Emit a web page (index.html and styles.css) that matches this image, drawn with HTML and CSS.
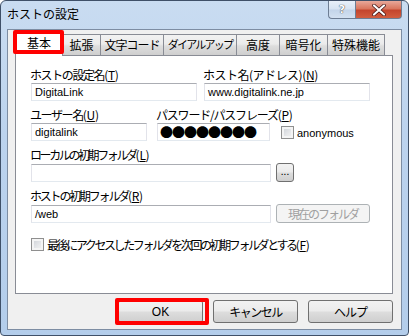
FILE: index.html
```html
<!DOCTYPE html>
<html lang="ja">
<head>
<meta charset="utf-8">
<title>ホストの設定</title>
<link rel="stylesheet" href="styles.css">
</head>
<body>
<div class="window">
  <div class="titlebar">
    <span class="title">ホストの設定</span>
    <div class="caption-btns">
      <div class="cbtn help-btn"><span>?</span></div>
      <div class="cbtn close-btn">
        <svg width="14" height="12" viewBox="0 0 14 12"><path d="M2 1.5 L12 10.5 M12 1.5 L2 10.5" stroke="#3b1010" stroke-width="3.6" stroke-linecap="round"/><path d="M2 1.5 L12 10.5 M12 1.5 L2 10.5" stroke="#ffffff" stroke-width="2.2" stroke-linecap="round"/></svg>
      </div>
    </div>
  </div>
  <div class="client">
    <div class="tabs">
      <div class="tab active t1">基本</div>
      <div class="tab t2">拡張</div>
      <div class="tab t3 ls1">文字コード</div>
      <div class="tab t4 kana-tab">ダイアルアップ</div>
      <div class="tab t5">高度</div>
      <div class="tab t6">暗号化</div>
      <div class="tab t7">特殊機能</div>
      <div class="highlight tab-hl"></div>
    </div>
    <div class="panel">
      <div class="row">
        <div class="field w166">
          <div class="label ls14">ホストの設定名<span class="mn">(<u>T</u>)</span></div>
          <div class="input">DigitaLink</div>
        </div>
        <div class="field w166 ml8">
          <div class="label ls05">ホスト名(アドレス)<span class="mn">(<u>N</u>)</span></div>
          <div class="input">www.digitalink.ne.jp</div>
        </div>
      </div>
      <div class="row">
        <div class="field w116">
          <div class="label ls14">ユーザー名<span class="mn">(<u>U</u>)</span></div>
          <div class="input">digitalink</div>
        </div>
        <div class="field w113 ml11">
          <div class="label ls12">パスワード/パスフレーズ<span class="mn">(<u>P</u>)</span></div>
          <div class="input dots">●●●●●●●●</div>
        </div>
        <div class="check anon">
          <span class="box"></span><span class="latin">anonymous</span>
        </div>
      </div>
      <div class="row">
        <div class="field w240">
          <div class="label ls24">ローカルの初期フォルダ<span class="mn">(<u>L</u>)</span></div>
          <div class="line">
            <div class="input"></div>
            <div class="btn small-btn">...</div>
          </div>
        </div>
      </div>
      <div class="row">
        <div class="field w240">
          <div class="label ls22">ホストの初期フォルダ<span class="mn">(<u>R</u>)</span></div>
          <div class="line">
            <div class="input">/web</div>
            <div class="btn wide-btn disabled ls2">現在のフォルダ</div>
          </div>
        </div>
      </div>
      <div class="check last">
        <span class="box"></span><span class="ls24">最後にアクセスしたフォルダを次回の初期フォルダとする<span class="mn">(<u>F</u>)</span></span>
      </div>
    </div>
    <div class="buttons">
      <div class="btn dlg-btn latin">OK<div class="highlight ok-hl"></div></div>
      <div class="btn dlg-btn ls15">キャンセル</div>
      <div class="btn dlg-btn ls1">ヘルプ</div>
    </div>
  </div>
</div>
</body>
</html>
```

FILE: styles.css
```css
* { box-sizing: border-box; }
html, body { margin: 0; padding: 0; background: #ffffff; }
body {
  font-family: "Noto Sans CJK JP", sans-serif;
  font-size: 12px;
  color: #000;
}
.latin { font-family: "Liberation Sans", sans-serif; }
.ls05 { letter-spacing: -0.5px; }
.ls1 { letter-spacing: -1px; }
.ls12 { letter-spacing: -1.2px; }
.ls14 { letter-spacing: -1.4px; }
.ls15 { letter-spacing: -1.5px; }
.ls2 { letter-spacing: -2px; }
.ls22 { letter-spacing: -2.2px; }
.ls24 { letter-spacing: -2.4px; }
.mn { letter-spacing: -0.3px; }
.window {
  width: 409px;
  height: 336px;
  border: 1px solid #3f5068;
  border-radius: 6px 6px 4px 4px;
  background: linear-gradient(180deg, #c9dcf1 0%, #bcd3ee 40%, #b3cdeb 100%);
  display: flex;
  flex-direction: column;
  overflow: hidden;
}
.titlebar {
  height: 28px;
  display: flex;
  align-items: flex-start;
  justify-content: space-between;
  flex: none;
}
.title {
  padding: 5px 0 0 6px;
  font-size: 12px;
  line-height: 16px;
  color: #000;
}
.caption-btns {
  display: flex;
  margin-right: 6px;
}
.cbtn {
  height: 18px;
  border: 1px solid #6d7d93;
  border-top: none;
  display: flex;
  align-items: center;
  justify-content: center;
}
.help-btn {
  width: 27px;
  border-radius: 0 0 0 4px;
  border-right: none;
  background: linear-gradient(180deg, #e8f0f9 0%, #d6e3f2 48%, #c3d4e9 52%, #d3e1f1 100%);
  font-family: "DejaVu Sans", sans-serif;
  font-weight: bold;
  font-size: 11px;
  color: #fff;
  text-shadow: 0 0 1px #444, 0 0 1px #444;
}
.close-btn {
  width: 47px;
  border-radius: 0 0 4px 0;
  background: linear-gradient(180deg, #e8a89a 0%, #d9775f 45%, #c4452d 55%, #d25d3f 100%);
}
.client {
  flex: 1;
  margin: 0 6px 5px 6px;
  border: 1px solid #7d8da3;
  background: #f0f0f0;
  display: flex;
  flex-direction: column;
}
.tabs {
  position: relative;
  display: flex;
  align-items: flex-end;
  height: 25px;
  padding-left: 7px;
}
.tab {
  height: 21px;
  margin-right: -1px;
  border: 1px solid #898c95;
  border-bottom: none;
  background: linear-gradient(180deg, #f2f2f2 0%, #ebebeb 45%, #dddddd 55%, #cfcfcf 100%);
  line-height: 19px;
  font-size: 12px;
  text-align: center;
  white-space: nowrap;
  flex: none;
}
.kana-tab { font-size: 11px; letter-spacing: -1.8px; }
.t1 { width: 48px; }
.t2 { width: 39px; }
.t3 { width: 64px; }
.t4 { width: 74px; }
.t5 { width: 44px; }
.t6 { width: 49px; }
.t7 { width: 58px; }
.tab.active {
  height: 24px;
  margin-bottom: -1px;
  background: #ffffff;
  line-height: 20px;
  position: relative;
  z-index: 2;
}
.highlight {
  position: absolute;
  border: 4px solid #ff0000;
  border-radius: 2px;
  z-index: 5;
}
.tab-hl {
  left: 5px;
  top: 0px;
  width: 51px;
  height: 24px;
}
.panel {
  margin: 0 8px 0 7px;
  height: 239px;
  border: 1px solid #898c95;
  background: #ffffff;
  padding: 11px 0 0 15px;
  position: relative;
  z-index: 1;
}
.row {
  display: flex;
  align-items: flex-end;
  margin-bottom: 6px;
}
.field { display: flex; flex-direction: column; }
.w166 { width: 166px; }
.w116 { width: 116px; }
.w113 { width: 113px; }
.w240 { width: 240px; }
.ml8 { margin-left: 7px; }
.ml11 { margin-left: 10px; }
.label {
  height: 15px;
  line-height: 15px;
  margin-bottom: 1px;
  white-space: nowrap;
  margin-left: -1px;
}
.input {
  height: 18px;
  border: 1px solid #abadb3;
  border-left-color: #e2e3ea;
  border-right-color: #e2e3ea;
  border-bottom-color: #e3e9ef;
  background: #fff;
  padding: 0 3px;
  line-height: 16px;
  font-family: "Liberation Sans", sans-serif;
  font-size: 11px;
  white-space: nowrap;
  overflow: hidden;
}
.line { display: flex; align-items: center; }
.line .input { width: 240px; flex: none; }
.dots {
  font-family: "Noto Sans CJK JP", sans-serif;
  font-size: 13px;
  letter-spacing: -1px;
  line-height: 16px;
  padding-left: 2px;
}
.btn {
  border: 1px solid #707070;
  border-radius: 3px;
  background: linear-gradient(180deg, #f2f2f2 0%, #ebebeb 48%, #dddddd 52%, #cfcfcf 100%);
  display: flex;
  align-items: center;
  justify-content: center;
  white-space: nowrap;
  flex: none;
}
.small-btn {
  width: 18px;
  height: 19px;
  margin-left: 5px;
  font-size: 10px;
  line-height: 10px;
  padding-bottom: 3px;
}
.wide-btn {
  width: 94px;
  height: 19px;
  margin-left: 5px;
}
.disabled {
  border-color: #adb2b5;
  background: #f4f4f4;
  color: #a0a0a0;
}
.check {
  display: flex;
  align-items: center;
  white-space: nowrap;
}
.box {
  width: 13px;
  height: 13px;
  border: 1px solid #8f8f8f;
  background: linear-gradient(135deg, #cbcfd5 0%, #e7e8ea 60%, #f4f4f4 100%);
  box-shadow: inset 0 0 0 2px #f4f4f4;
  flex: none;
}
.anon { margin-left: 11px; margin-bottom: 2px; font-size: 11px; }
.anon .box { margin-right: 3px; }
.last { margin-top: 13px; }
.last .box { margin-right: 3px; }
.buttons {
  display: flex;
  justify-content: flex-end;
  margin: 6px 8px 0 0;
  gap: 10px;
}
.dlg-btn {
  width: 85px;
  height: 23px;
  position: relative;
}
.ok-hl {
  left: -4px;
  top: -3px;
  width: 94px;
  height: 27px;
}
```
